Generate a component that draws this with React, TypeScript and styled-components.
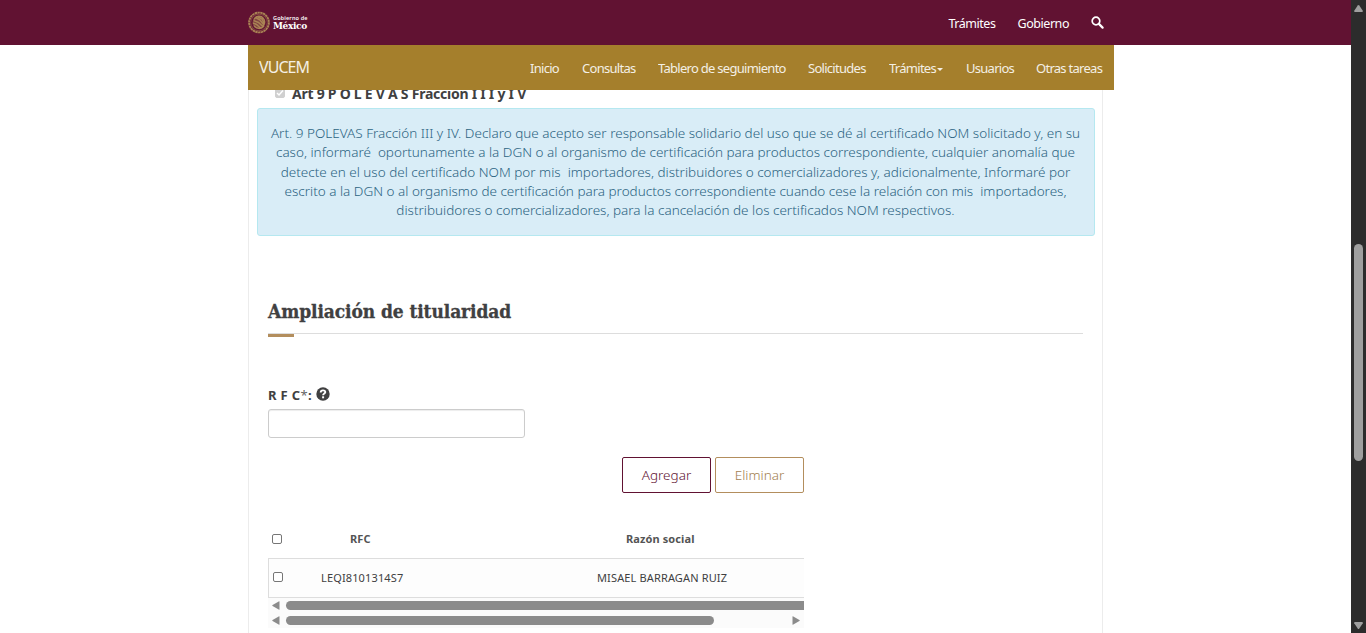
import React from "react";
import styled, { createGlobalStyle } from "styled-components";

const GlobalStyle = createGlobalStyle`
  * { box-sizing: border-box; }
  html, body { margin: 0; height: 100%; overflow: hidden; }
  body { background: #fff; color: #404041; font-family: "Noto Sans", "Open Sans", sans-serif; font-size: 14px; }
`;

const Window = styled.div`
  display: flex;
  width: 1366px;
  height: 633px;
  overflow: hidden;
`;

const Page = styled.div`
  display: flex;
  flex-direction: column;
  width: 1351px;
  height: 633px;
`;

const TopBar = styled.header`
  flex: none;
  display: flex;
  align-items: center;
  height: 45px;
  padding: 0 247px 0 248px;
  background: #611232;
`;

const Brand = styled.div`
  display: flex;
  align-items: center;
  gap: 3px;
  height: 44px;
`;

const BrandName = styled.div`
  display: flex;
  flex-direction: column;
  color: #fff;
  margin-left: -1px;
`;

const BrandSmall = styled.span`
  font: 600 5.5px/6px "Noto Sans", sans-serif;
  letter-spacing: 0.15px;
  white-space: nowrap;
`;

const BrandLarge = styled.span`
  font: 700 10px/9px "DejaVu Serif Condensed", "DejaVu Serif", serif;
  font-stretch: condensed;
  letter-spacing: -0.35px;
  height: 10px;
`;

const TopLinks = styled.nav`
  display: flex;
  align-items: center;
  margin-left: auto;
  color: #fff;
`;

const TopLink = styled.a`
  margin-right: 22px;
  font-size: 12.5px;
  line-height: 20px;
  letter-spacing: -0.45px;
  padding-top: 2px;
  white-space: nowrap;
`;

const NavBar = styled.nav`
  flex: none;
  display: flex;
  align-items: center;
  width: 866px;
  height: 45px;
  margin-left: 248px;
  padding: 0 11px;
  background: #a57f2c;
  color: #fff;
`;

const NavTitle = styled.span`
  font-size: 16px;
  line-height: 20px;
  letter-spacing: -0.95px;
  margin-top: -1px;
  opacity: 0.88;
`;

const NavLinks = styled.div`
  display: flex;
  gap: 22px;
  margin-left: auto;
  padding-top: 1px;
`;

const NavLink = styled.a<{ $width: number }>`
  display: flex;
  align-items: center;
  justify-content: space-between;
  width: ${(p) => p.$width}px;
  font-size: 13px;
  line-height: 20px;
  letter-spacing: -0.72px;
  white-space: nowrap;
  opacity: 0.88;
`;

const Caret = styled.span`
  margin: 2px 1px 0 0;
  border: 3px solid transparent;
  border-top-color: #fff;
  border-bottom: 0;
`;

const Content = styled.main`
  flex: 1;
  width: 855px;
  margin-left: 248px;
  padding: 0 8px;
  border: solid #ececec;
  border-width: 0 1px;
  overflow: hidden;
`;

const CheckRow = styled.label`
  display: flex;
  align-items: center;
  gap: 7px;
  height: 20px;
  margin: -7px 0 5px 18px;
  font-size: 14px;
  font-weight: 700;
  white-space: nowrap;
`;

const CheckText = styled.span`
  letter-spacing: -0.25px;
`;

const Box = styled.span<{ $disabled?: boolean }>`
  display: flex;
  flex: none;
  width: 10px;
  height: 10px;
  border: 1px solid ${(p) => (p.$disabled ? "#d0d0d0" : "#767676")};
  border-radius: 2px;
  background: ${(p) => (p.$disabled ? "#d0d0d0" : "#fff")};
`;

const Alert = styled.div`
  width: 838px;
  height: 128px;
  padding: 14px 1px 0 0;
  border: 1px solid #b5e8f0;
  border-radius: 3px;
  background: #d9edf7;
  color: #2c6482;
  font-weight: 300;
  text-align: center;
`;

const AlertLine = styled.div`
  height: 19.3px;
  font-size: 13.5px;
  line-height: 20px;
  letter-spacing: -0.003px;
  white-space: pre;
`;

const Section = styled.section`
  display: flex;
  flex-direction: column;
  margin: 60px 0 0 11px;
`;

const Title = styled.h3`
  width: 815px;
  height: 38px;
  margin: 0;
  border-bottom: 1px solid #ddd;
  font: 700 19px/30px "DejaVu Serif Condensed", "DejaVu Serif", serif;
  font-stretch: condensed;
  letter-spacing: -0.1px;
  -webkit-text-stroke: 0.3px #404041;
  white-space: nowrap;
`;

const Accent = styled.div`
  width: 26px;
  height: 3px;
  background: #b38e5d;
`;

const FieldLabel = styled.label`
  display: flex;
  align-items: center;
  height: 20px;
  margin-top: 48px;
  font-size: 13px;
  font-weight: 700;
  letter-spacing: 0.35px;
  white-space: nowrap;
`;

const Star = styled.span`
  font-weight: 400;
  color: #666;
`;

const Input = styled.input`
  width: 257px;
  height: 29px;
  margin-top: 4px;
  border: 1px solid #ccc;
  border-radius: 3px;
  background: #fff;
  box-shadow: inset 0 1px 1px rgba(0, 0, 0, 0.075);
`;

const Panel = styled.div`
  width: 536px;
`;

const Actions = styled.div`
  display: flex;
  justify-content: flex-end;
  gap: 4px;
  margin-top: 19px;
`;

const Button = styled.button<{ $color: string; $text: string }>`
  width: 89px;
  height: 36px;
  padding: 0;
  border: 1px solid ${(p) => p.$color};
  border-radius: 2px;
  background: #fff;
  color: ${(p) => p.$text};
  font: 300 13.5px/20px "Noto Sans", sans-serif;
`;

const HeadRow = styled.div`
  display: grid;
  grid-template-columns: 24px 138px 1fr;
  align-items: center;
  height: 39px;
  margin-top: 26px;
  padding-left: 4px;
  font-size: 11px;
  font-weight: 700;
  letter-spacing: 0.1px;
  color: #545454;
`;

const BodyRow = styled(HeadRow)`
  height: 40px;
  margin-top: 0;
  padding: 0 0 2px 4px;
  border: 1px solid #ddd;
  border-right: 0;
  font-weight: 400;
  letter-spacing: 0.14px;
  color: #404041;
  background: #fdfdfd;
`;

const Cell = styled.span<{ $shift: number }>`
  padding-left: ${(p) => p.$shift}px;
  white-space: nowrap;
`;

const Scroll = styled.div`
  display: flex;
  align-items: center;
  height: 15px;
  padding-left: 4px;
  background: #fbfbfb;
`;

const Thumb = styled.div<{ $width: number; $cut?: boolean }>`
  flex: none;
  width: ${(p) => p.$width}px;
  height: 9px;
  margin-left: 6px;
  border-radius: ${(p) => (p.$cut ? "5px 0 0 5px" : "5px")};
  background: #8b8b8b;
`;

const RightArrow = styled.svg`
  margin: 0 4px 0 auto;
`;

const VScroll = styled.aside`
  display: flex;
  flex-direction: column;
  align-items: center;
  width: 15px;
  height: 633px;
  padding: 5px 0 4px;
  background: #2c2c2c;
`;

const VThumb = styled.div`
  width: 9px;
  height: 217px;
  margin: 232px 0 auto;
  border-radius: 5px;
  background: #9f9f9f;
`;

const HelpIcon = styled.svg`
  margin: -2px 0 0 4px;
`;

const Seal = () => (
  <svg width="23" height="23" viewBox="0 0 23 23" fill="none" stroke="#a98354">
    <circle cx="11" cy="11.500" r="9.900" strokeWidth="1.900" strokeDasharray="2.400 .4" />
    <circle cx="11" cy="11.500" r="8.300" strokeWidth=".8" opacity=".6" />
    <circle cx="11" cy="11.500" r="6.500" fill="#a98354" stroke="none" opacity=".45" />
    <path d="M6 8.500c2-4 7-4 9-1.500 2 2 2 5.500 0 8M5.500 9.500l5 2 5 4.500M7.500 6.500l4.500 2.500 4 5M5 12l3.500 1.500 4 3.500M6 14.500c2 3.500 7 4 10 .5M10 6l4 2 2 4" strokeWidth="1.500" />
  </svg>
);

const Magnifier = () => (
  <svg width="13" height="13" viewBox="0 0 13 13" fill="none" stroke="#fff">
    <circle cx="5" cy="5" r="3.800" strokeWidth="1.700" />
    <path d="M7.900 7.900l3.700 3.700" strokeWidth="2.200" strokeLinecap="round" />
  </svg>
);

const Help = () => (
  <HelpIcon width="14" height="14" viewBox="0 0 14 14">
    <circle cx="7" cy="7" r="6.700" fill="#404041" />
    <path d="M4.700 5.400c0-2.700 4.600-2.700 4.600-.3 0 1.500-2.200 1.400-2.200 3.200" fill="none" stroke="#fff" strokeWidth="1.900" />
    <path d="M6.100 9.300h2v2h-2z" fill="#fff" />
  </HelpIcon>
);

const LeftArrow = () => (
  <svg width="8" height="9" viewBox="0 0 8 9" fill="#8b8b8b">
    <path d="M7.500.8v7.400q0 .8-.8.400L.6 5q-.7-.5 0-1L6.700.400q.8-.4.8.4z" />
  </svg>
);

const alertLines = [
  "Art. 9 POLEVAS Fracción III y IV. Declaro que acepto ser responsable solidario del uso que se dé al certificado NOM solicitado y, en su",
  "caso, informaré  oportunamente a la DGN o al organismo de certificación para productos correspondiente, cualquier anomalía que",
  "detecte en el uso del certificado NOM por mis  importadores, distribuidores o comercializadores y, adicionalmente, Informaré por",
  "escrito a la DGN o al organismo de certificación para productos correspondiente cuando cese la relación con mis  importadores,",
  "distribuidores o comercializadores, para la cancelación de los certificados NOM respectivos.",
];

export default function App() {
  return (
    <Window>
      <GlobalStyle />
      <Page>
        <TopBar>
          <Brand>
            <Seal />
            <BrandName>
              <BrandSmall>Gobierno de</BrandSmall>
              <BrandLarge>México</BrandLarge>
            </BrandName>
          </Brand>
          <TopLinks>
            <TopLink>Trámites</TopLink>
            <TopLink>Gobierno</TopLink>
            <Magnifier />
          </TopLinks>
        </TopBar>
        <NavBar>
          <NavTitle>VUCEM</NavTitle>
          <NavLinks>
            <NavLink $width={30}>Inicio</NavLink>
            <NavLink $width={54}>Consultas</NavLink>
            <NavLink $width={128}>Tablero de seguimiento</NavLink>
            <NavLink $width={59}>Solicitudes</NavLink>
            <NavLink $width={55}>Trámites<Caret /></NavLink>
            <NavLink $width={48}>Usuarios</NavLink>
            <NavLink $width={67}>Otras tareas</NavLink>
          </NavLinks>
        </NavBar>
        <Content>
          <CheckRow>
            <Box $disabled>
              <svg width="8" height="8" viewBox="0 0 8 8" fill="none" stroke="#fff" strokeWidth="1.400">
                <path d="M1 4l2 2 4-4.500" />
              </svg>
            </Box>
            <CheckText>Art 9 P O L E V A S Fraccion I I I y I V</CheckText>
          </CheckRow>
          <Alert>
            {alertLines.map((text) => (
              <AlertLine key={text}>{text}</AlertLine>
            ))}
          </Alert>
          <Section>
            <Title>Ampliación de titularidad</Title>
            <Accent />
            <FieldLabel>R F C<Star>*</Star>:<Help /></FieldLabel>
            <Input />
            <Panel>
              <Actions>
                <Button $color="#611232" $text="#611232">Agregar</Button>
                <Button $color="#b38e5d" $text="#a27e50">Eliminar</Button>
              </Actions>
              <HeadRow>
                <Box />
                <Cell $shift={54}>RFC</Cell>
                <Cell $shift={192}>Razón social</Cell>
              </HeadRow>
              <BodyRow>
                <Box />
                <Cell $shift={24}>LEQI8101314S7</Cell>
                <Cell $shift={162}>MISAEL BARRAGAN RUIZ</Cell>
              </BodyRow>
              <Scroll>
                <LeftArrow />
                <Thumb $width={518} $cut />
              </Scroll>
              <Scroll>
                <LeftArrow />
                <Thumb $width={428} />
                <RightArrow width="8" height="9" viewBox="0 0 8 9" fill="#8b8b8b">
                  <path d="M.5.800v7.400q0 .8.8.4L7.400 5q.7-.5 0-1L1.300.400Q.5 0 .5.800z" />
                </RightArrow>
              </Scroll>
            </Panel>
          </Section>
        </Content>
      </Page>
      <VScroll>
        <svg width="9" height="7" viewBox="0 0 9 7" fill="#9f9f9f">
          <path d="M3.700.6q.8-1 1.600 0l3.500 5.200q.3 1.200-.8 1.200H1Q-.1 7 .2 5.800z" />
        </svg>
        <VThumb />
        <svg width="9" height="7" viewBox="0 0 9 7" fill="#9f9f9f">
          <path d="M3.700 6.400q.8 1 1.600 0l3.500-5.200Q9.100 0 8 0H1Q-.1 0 .2 1.200z" />
        </svg>
      </VScroll>
    </Window>
  );
}
